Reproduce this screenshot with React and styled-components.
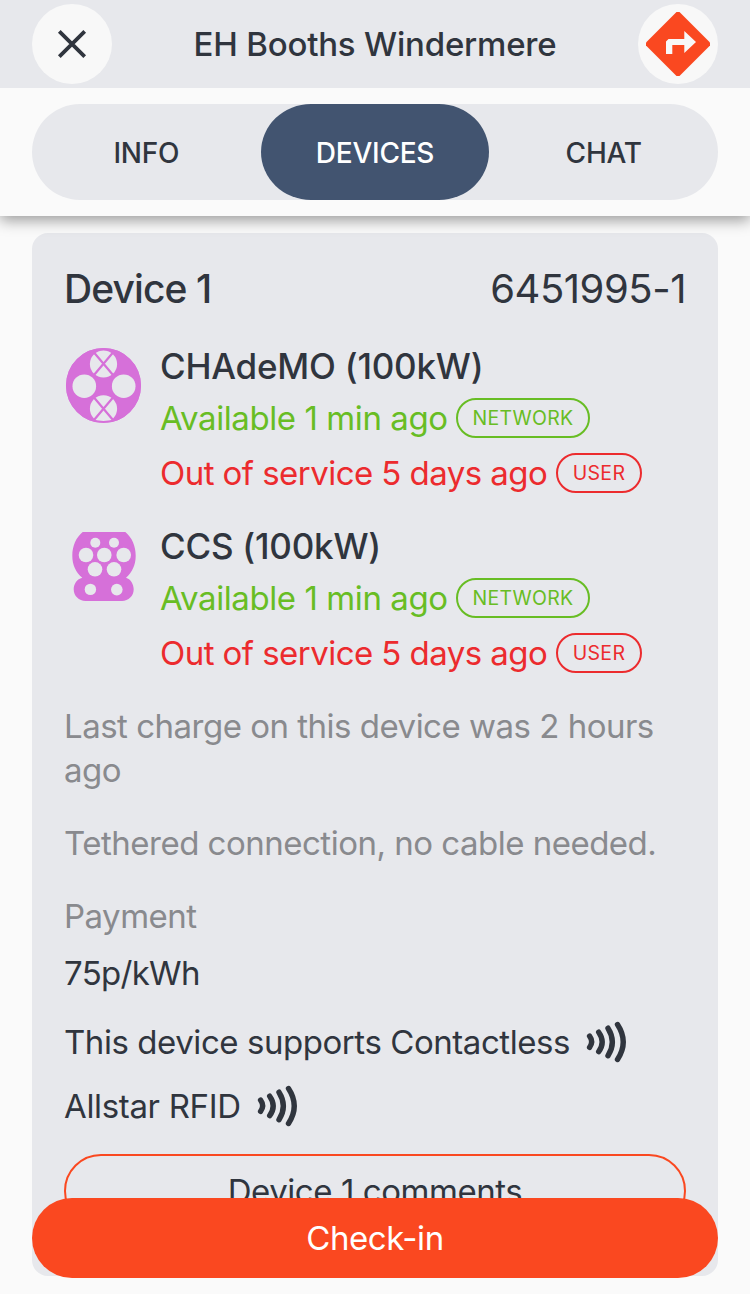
import React, { useState } from 'react'
import styled, { createGlobalStyle } from 'styled-components'

const tabs = ['INFO', 'DEVICES', 'CHAT']

const connectors = [
  { name: 'CHAdeMO (100kW)', icon: 'chademo' },
  { name: 'CCS (100kW)', icon: 'ccs' },
]

const ChademoIcon = () => (
  <svg width="76" height="76" viewBox="0 0 76 76">
    <circle cx="38.5" cy="38.5" r="37.5" fill="#d670d9" />
    <g fill="#e7e8ec">
      <circle cx="19.3" cy="39.2" r="11.8" />
      <circle cx="58.7" cy="39.2" r="11.8" />
      <circle cx="38.5" cy="17" r="13.6" />
      <circle cx="38.5" cy="61.8" r="13.6" />
    </g>
    <path
      d="M29 5.5 48 28M48 5.5 29 28M29 50.5 48 73M48 50.5 29 73"
      stroke="#d670d9"
      strokeWidth="2.2"
    />
    <circle cx="38.5" cy="38.5" r="36.5" fill="none" stroke="#d670d9" strokeWidth="2" />
  </svg>
)

const CcsIcon = () => (
  <svg width="76" height="76" viewBox="0 0 76 76">
    <path
      d="M17.7 5H60.3C67 10.5 70.7 19 70.7 28.7C70.7 38 67 45.5 61 50.7C65.5 52 68.7 57 68.7 62.3C68.7 69 63.5 74 57 74H20.5C14 74 8.7 69 8.7 62.3C8.7 57 12 52 17.3 50.7C11 45.5 7.3 38 7.3 28.7C7.3 19 11 10.5 17.7 5Z"
      fill="#d670d9"
    />
    <g fill="#e7e8ec">
      <circle cx="30.3" cy="15.7" r="5" />
      <circle cx="49" cy="15.7" r="5" />
      <circle cx="21" cy="28" r="7.3" />
      <circle cx="39.3" cy="28" r="7.3" />
      <circle cx="58.7" cy="28" r="7.3" />
      <circle cx="30" cy="42.3" r="7.3" />
      <circle cx="49" cy="42.3" r="7.3" />
      <circle cx="25.4" cy="62.4" r="5.7" />
      <circle cx="51.8" cy="62.6" r="5.8" />
    </g>
  </svg>
)

const ContactlessIcon = () => (
  <svg width="44" height="44" viewBox="0 0 44 44" fill="none" stroke="#30353e" strokeWidth="5.4" strokeLinecap="round">
    <path d="M4.6 16.2Q8.7 21.8 4.6 27.4" />
    <path d="M13.7 12.2Q20.7 22 13.7 31.6" />
    <path d="M23 8.2Q31.7 22 23 35.7" />
    <path d="M32.5 4.5Q44 22 32.5 39.5" />
  </svg>
)

const App = () => {

  const [activeTab, setActiveTab] = useState('DEVICES');

  return (
    <Container>
      <GlobalStyle />
      <Header>
        <RoundButton>
          <svg width="30" height="30" viewBox="0 0 30 30">
            <path d="M2.3 2.3 27.7 27.7M27.7 2.3 2.3 27.7" stroke="#30353e" strokeWidth="3.8" />
          </svg>
        </RoundButton>
        <Title>EH Booths Windermere</Title>
        <RoundButton>
          <svg width="64" height="64" viewBox="0 0 64 64">
            <path d="M30.5 0H33.5L64 30.5V33.5L33.5 64H30.5L0 33.5V30.5Z" fill="#fa4820" />
            <path d="M20 42V29.5L22.5 27H38.3V19L50 30 38.3 41V33H26.3V42Z" fill="#f8f8f8" />
          </svg>
        </RoundButton>
      </Header>
      <TabBar>
        <Tabs>
          {tabs.map((tab) => (
            <Tab key={tab} $active={tab === activeTab} onClick={()=>setActiveTab(tab)}>{tab}</Tab>
          ))}
        </Tabs>
      </TabBar>
      <Content>
        <Card>
          <CardHeader>
            <h2>Device 1</h2>
            <p>6451995-1</p>
          </CardHeader>
          {connectors.map(({ name, icon }) => (
            <Connector key={name}>
              <ConnectorIcon>
                {icon === 'chademo' ? <ChademoIcon /> : <CcsIcon />}
              </ConnectorIcon>
              <div>
                <ConnectorName>{name}</ConnectorName>
                <Status $color="#68bd24" $width="287px" $spacing="-0.42px">
                  <p>Available 1 min ago</p>
                  <Badge $width="134px">NETWORK</Badge>
                </Status>
                <Status $color="#ec2b2e" $width="387px" $spacing="-0.55px">
                  <p>Out of service 5 days ago</p>
                  <Badge $width="86px">USER</Badge>
                </Status>
              </div>
            </Connector>
          ))}
          <Note>Last charge on this device was 2 hours ago</Note>
          <Note>Tethered connection, no cable needed.</Note>
          <Note>Payment</Note>
          <Price>75p/kWh</Price>
          <Support>
            <p>This device supports Contactless</p>
            <ContactlessIcon />
          </Support>
          <Support $spacing="-0.34px">
            <p>Allstar RFID</p>
            <ContactlessIcon />
          </Support>
          <CommentsButton>Device 1 comments</CommentsButton>
        </Card>
      </Content>
      <CheckIn>Check-in</CheckIn>
    </Container>
  )
}

export default App

const GlobalStyle = createGlobalStyle`
  * {
    box-sizing: border-box;
    margin: 0;
    padding: 0;
  }
  body {
    background-color: #fafafa;
    overflow: hidden;
  }
  button {
    border: none;
    font: inherit;
    color: inherit;
    letter-spacing: inherit;
    cursor: pointer;
  }
  svg {
    display: block;
    flex-shrink: 0;
  }
`

const Container = styled.div`
  height: 1294px;
  overflow: hidden;
  background-color: #fafafa;
  color: #30353e;
  font-family: Inter, 'Liberation Sans', sans-serif;
  font-size: 33px;
  line-height: 44px;
  letter-spacing: -0.44px;
  white-space: nowrap;
`

const Header = styled.div`
  position: relative;
  z-index: 2;
  height: 88px;
  padding: 0 32px;
  display: flex;
  align-items: center;
  justify-content: space-between;
  background-color: #e7e8ec;
`

const RoundButton = styled.button`
  width: 80px;
  height: 80px;
  border-radius: 50%;
  display: flex;
  align-items: center;
  justify-content: center;
  background-color: #f8f8f8;
`

const Title = styled.h1`
  font-size: 33px;
  font-weight: 500;
  letter-spacing: -0.2px;
`

const TabBar = styled.div`
  position: relative;
  z-index: 1;
  height: 128px;
  padding: 16px 32px;
  background-color: #fafafa;
  box-shadow: 0 4px 14px rgba(0, 0, 0, 0.4);
`

const Tabs = styled.div`
  height: 96px;
  border-radius: 48px;
  display: grid;
  grid-template-columns: repeat(3, 1fr);
  background-color: #e7e8ec;
`

const Tab = styled.button`
  padding-top: 2px;
  border-radius: 50px / 48px;
  font-size: 28px;
  font-weight: 500;
  letter-spacing: -0.25px;
  color: ${props => props.$active ? '#fff' : '#30353e'};
  background-color: ${props => props.$active ? '#425470' : 'transparent'};
`

const Content = styled.div`
  padding: 17px 32px 0;
`

const Card = styled.div`
  height: 1043px;
  padding: 32px;
  border-radius: 16px;
  background-color: #e7e8ec;
`

const CardHeader = styled.div`
  display: flex;
  justify-content: space-between;
  margin-bottom: 31px;
  font-size: 40px;
  line-height: 48px;

  h2 {
    font-size: 39px;
    font-weight: 500;
    letter-spacing: -0.9px;
  }
`

const Connector = styled.div`
  display: grid;
  grid-template-columns: 96px 1fr;
  height: 149px;
  margin-bottom: 31px;
`

const ConnectorIcon = styled.div`
  padding: 3px 0 0 1px;
`

const ConnectorName = styled.h3`
  margin-bottom: 10px;
  font-size: 35px;
  font-weight: 500;
  letter-spacing: -0.23px;
`

const Status = styled.div`
  display: grid;
  grid-template-columns: ${props => props.$width} auto;
  justify-content: start;
  gap: 9px;
  height: 40px;
  margin-bottom: 15px;
  color: ${props => props.$color};
  line-height: 40px;
  letter-spacing: ${props => props.$spacing};
`

const Badge = styled.span`
  width: ${props => props.$width};
  height: 40px;
  border: 2px solid currentColor;
  border-radius: 20px;
  font-size: 19.5px;
  line-height: 36px;
  letter-spacing: 0.3px;
  text-align: center;
`

const Note = styled.p`
  margin-bottom: 29px;
  color: #898a8e;
  letter-spacing: -0.5px;
  white-space: normal;
`

const Price = styled.p`
  margin: -16px 0 25px;
  letter-spacing: -0.7px;
`

const Support = styled.div`
  display: flex;
  gap: 15px;
  margin-bottom: 20px;
  letter-spacing: ${props => props.$spacing || 'inherit'};
`

const CommentsButton = styled.button`
  width: 622px;
  height: 74px;
  margin-top: 6px;
  border: 2px solid #fa4820;
  border-radius: 37px;
  background-color: transparent;
`

const CheckIn = styled.button`
  position: fixed;
  left: 32px;
  right: 32px;
  bottom: 16px;
  height: 80px;
  border-radius: 40px;
  background-color: #fa4820;
  color: #fff;
`
